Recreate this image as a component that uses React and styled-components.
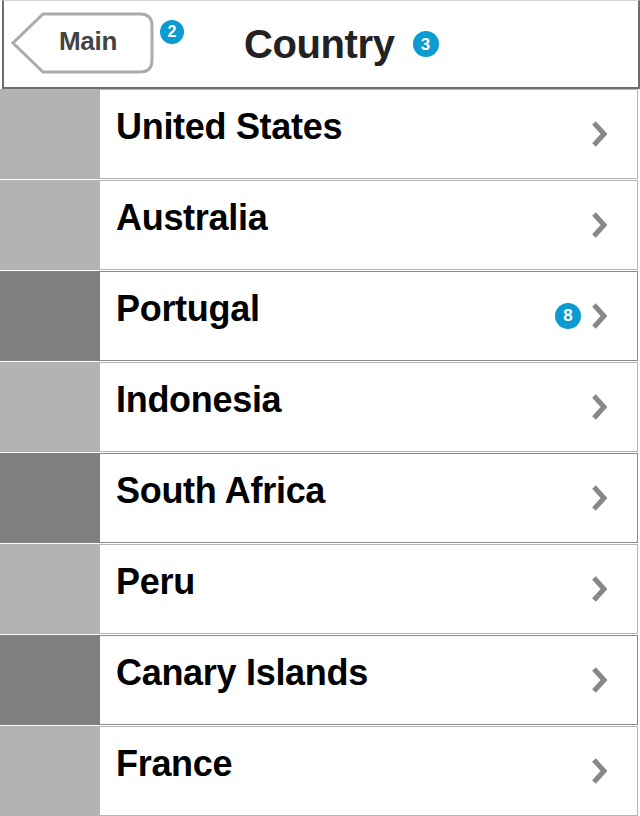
import styled, { createGlobalStyle } from 'styled-components';

const GlobalStyle = createGlobalStyle`
    body {
        margin: 0;
        background: #ffffff;
        font-family: 'Liberation Sans', Arial, sans-serif;
    }
`;

const Page = styled.div`
    width: 640px;
    height: 816px;
    overflow: hidden;
`;

// Barra superior con boton de vuelta y titulo
const Header = styled.div`
    box-sizing: border-box;
    margin-left: 2px;
    width: 638px;
    height: 89px;
    border-top: 1px solid #d4d4d4;
    border-left: 2px solid #6e6e6e;
    border-right: 2px solid #6e6e6e;
    border-bottom: 2px solid #6e6e6e;
    display: flex;
    align-items: flex-start;
    padding: 11px 0 0 6px;
`;

const BackButton = styled.div`
    position: relative;
    width: 144px;
    height: 62px;
    display: flex;
    align-items: center;
    justify-content: center;
    padding: 0 0 3px 30px;
    box-sizing: border-box;
    font-size: 26px;
    font-weight: bold;
    color: #444444;
    letter-spacing: -0.3px;

    svg {
        position: absolute;
        left: 0;
        top: 0;
    }

    span {
        position: relative;
        margin-left: -18px;
    }
`;

const Badge = styled.div`
    width: ${p => p.size}px;
    height: ${p => p.size}px;
    border-radius: 50%;
    background: #0b9bd1;
    color: #ffffff;
    font-size: ${p => Math.round(p.size * 0.66)}px;
    font-weight: bold;
    display: flex;
    align-items: center;
    justify-content: center;
    flex-shrink: 0;
    letter-spacing: 0;
`;

const BackBadge = styled(Badge)`
    margin: 8px 0 0 6px;
`;

const Title = styled.div`
    display: flex;
    align-items: center;
    gap: 18px;
    margin: 12px 0 0 60px;
    font-size: 40px;
    font-weight: bold;
    color: #222222;
    letter-spacing: -0.4px;
    line-height: 1;
`;

const List = styled.div`
    display: flex;
    flex-direction: column;
    gap: 1px;
`;

const Row = styled.div`
    display: flex;
    height: 90px;
`;

const Swatch = styled.div`
    width: 100px;
    flex-shrink: 0;
    background: ${p => (p.dark ? '#808080' : '#b3b3b3')};
`;

const Cell = styled.div`
    flex: 1;
    margin-right: 2px;
    box-sizing: border-box;
    border-top: 1px solid ${p => (p.dark ? '#8c8c8c' : '#b4b4b4')};
    border-bottom: 1px solid ${p => (p.dark ? '#8c8c8c' : '#b4b4b4')};
    border-right: 1px solid ${p => (p.dark ? '#8c8c8c' : '#b4b4b4')};
    display: flex;
    align-items: center;
    padding: 0 30px 14px 16px;
`;

const Name = styled.div`
    flex: 1;
    font-size: 36px;
    font-weight: bold;
    color: #000000;
    letter-spacing: -0.3px;
`;

const RowBadge = styled(Badge)`
    margin: 14px 10px 0 0;
`;

const Chevron = styled.svg`
    margin-top: 14px;
    flex-shrink: 0;
`;

const BackShape = () => (
    <svg width='144' height='62' viewBox='0 0 144 62'>
        <path
            d='M 33 2 L 130 2 Q 142 2 142 14 L 142 48 Q 142 60 130 60 L 33 60 L 3 31 Z'
            fill='#ffffff'
            stroke='#ababab'
            strokeWidth='3'
        />
    </svg>
);

const Arrow = () => (
    <Chevron width='16' height='28' viewBox='0 0 16 28'>
        <polyline
            points='3,3 13,14 3,25'
            fill='none'
            stroke='#888888'
            strokeWidth='5'
        />
    </Chevron>
);

const countries = [
    { name: 'United States', dark: false },
    { name: 'Australia', dark: false },
    { name: 'Portugal', dark: true, badge: 8 },
    { name: 'Indonesia', dark: false },
    { name: 'South Africa', dark: true },
    { name: 'Peru', dark: false },
    { name: 'Canary Islands', dark: true },
    { name: 'France', dark: false },
];

const App = () => {
    return (
        <Page>
            <GlobalStyle />
            <Header>
                <BackButton>
                    <BackShape />
                    <span>Main</span>
                </BackButton>
                <BackBadge size={24}>2</BackBadge>
                <Title>
                    Country
                    <Badge size={26}>3</Badge>
                </Title>
            </Header>
            <List>
                {countries.map(country => (
                    <Row key={country.name}>
                        <Swatch dark={country.dark} />
                        <Cell dark={country.dark}>
                            <Name>{country.name}</Name>
                            {country.badge && (
                                <RowBadge size={26}>{country.badge}</RowBadge>
                            )}
                            <Arrow />
                        </Cell>
                    </Row>
                ))}
            </List>
        </Page>
    );
};

export default App;
